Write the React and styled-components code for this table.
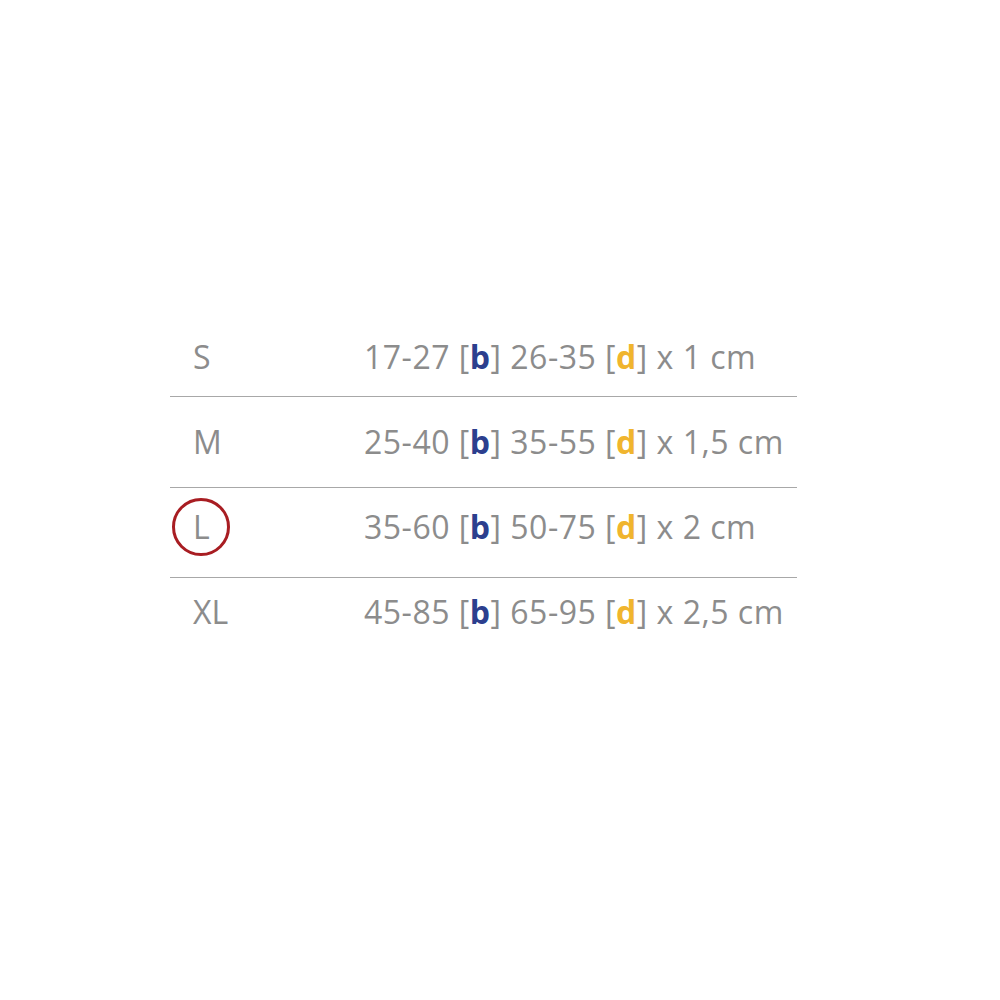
import React from 'react';
import styled, { createGlobalStyle } from 'styled-components';

const Global = createGlobalStyle`
  html, body {
    margin: 0;
    padding: 0;
    background: #fff;
  }
`;

const Page = styled.div`
  width: 1000px;
  height: 1000px;
  display: flex;
  justify-content: center;
  padding-top: 317px;
  box-sizing: border-box;
  font-family: "Open Sans", "Liberation Sans", sans-serif;
  color: #8c8c8c;
`;

const Table = styled.div`
  width: 627px;
  margin-left: -33px;
  display: flex;
  flex-direction: column;
`;

const Row = styled.div`
  display: grid;
  grid-template-columns: 194px 1fr;
  align-items: center;
  height: ${p => p.$height}px;
  padding-bottom: ${p => p.$lift}px;
  box-sizing: border-box;
  border-bottom: ${p => (p.$last ? 'none' : '1px solid #a8a8a8')};
  white-space: nowrap;
  font-size: 32px;
  line-height: 1;
`;

const Size = styled.span`
  position: relative;
  justify-self: start;
  margin-left: 23px;
`;

const Ring = styled.span`
  position: absolute;
  left: 50%;
  top: 50%;
  width: 52px;
  height: 52px;
  border: 3px solid #a81d22;
  border-radius: 50%;
  transform: translate(-50%, -50%);
`;

const Measure = styled.span`
  letter-spacing: 0.5px;
`;

const Key = styled.b`
  font-weight: 700;
  color: ${p => p.$tone};
`;

const rows = [
  { size: 'S', b: '17-27', d: '26-35', w: '1', height: 80, lift: 0 },
  { size: 'M', b: '25-40', d: '35-55', w: '1,5', height: 91, lift: 0 },
  { size: 'L', b: '35-60', d: '50-75', w: '2', height: 90, lift: 12, active: true },
  { size: 'XL', b: '45-85', d: '65-95', w: '2,5', height: 90, lift: 22, last: true },
];

export default function App() {
  return (
    <Page>
      <Global />
      <Table>
        {rows.map(r => (
          <Row key={r.size} $height={r.height} $lift={r.lift} $last={r.last}>
            <Size>
              {r.active && <Ring />}
              {r.size}
            </Size>
            <Measure>
              {r.b} [<Key $tone="#2c3f8e">b</Key>] {r.d} [<Key $tone="#f0b52e">d</Key>] x {r.w} cm
            </Measure>
          </Row>
        ))}
      </Table>
    </Page>
  );
}
